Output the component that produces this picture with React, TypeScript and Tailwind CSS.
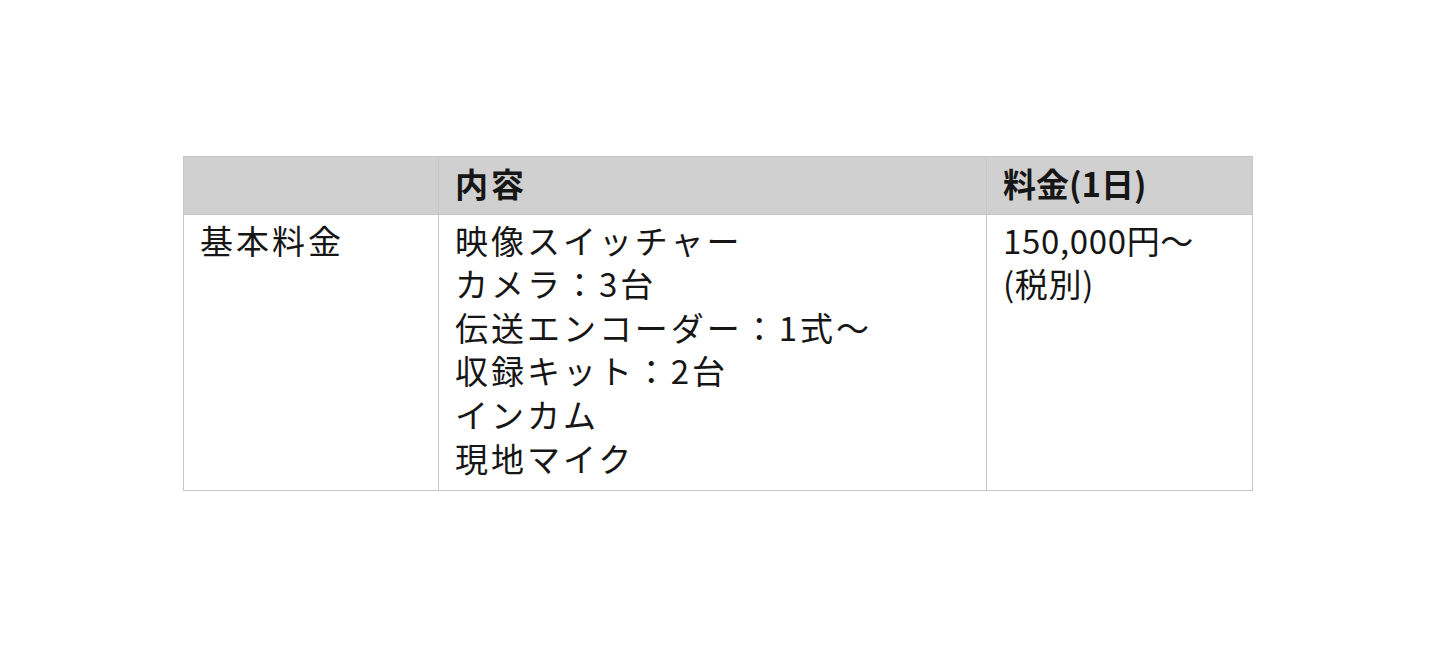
import React from 'react';

const items = [
  '映像スイッチャー',
  'カメラ：3台',
  '伝送エンコーダー：1式〜',
  '収録キット：2台',
  'インカム',
  '現地マイク',
];

export default function App() {
  return (
    <div
      className="w-[1440px] h-[666px] bg-white pt-[156px] pl-[183px]"
      style={{ fontFamily: '"Noto Sans CJK JP", "Noto Sans", sans-serif' }}
    >
      <table className="w-[1070px] border-collapse text-[33px] leading-[43.6px] tracking-[0.09em] text-[#161616]">
        <thead>
          <tr className="bg-[#d0d0d0]">
            <th className="w-[255px] border border-[#c6c6c6] px-4 pt-[5px] pb-[8px] text-left font-bold"></th>
            <th className="w-[548px] border border-[#c6c6c6] px-4 pt-[5px] pb-[8px] text-left font-bold">内容</th>
            <th className="w-[266px] border border-[#c6c6c6] px-4 pt-[5px] pb-[8px] text-left font-bold tracking-normal">料金(1日)</th>
          </tr>
        </thead>
        <tbody>
          <tr>
            <td className="border border-[#c6c6c6] px-4 pt-[4px] pb-[10px] align-top">基本料金</td>
            <td className="border border-[#c6c6c6] px-4 pt-[4px] pb-[10px] align-top">
              {items.map((t) => (
                <div key={t}>{t}</div>
              ))}
            </td>
            <td className="border border-[#c6c6c6] px-4 pt-[4px] pb-[10px] align-top tracking-[0.02em]">
              <div>150,000円〜</div>
              <div>(税別)</div>
            </td>
          </tr>
        </tbody>
      </table>
    </div>
  );
}
